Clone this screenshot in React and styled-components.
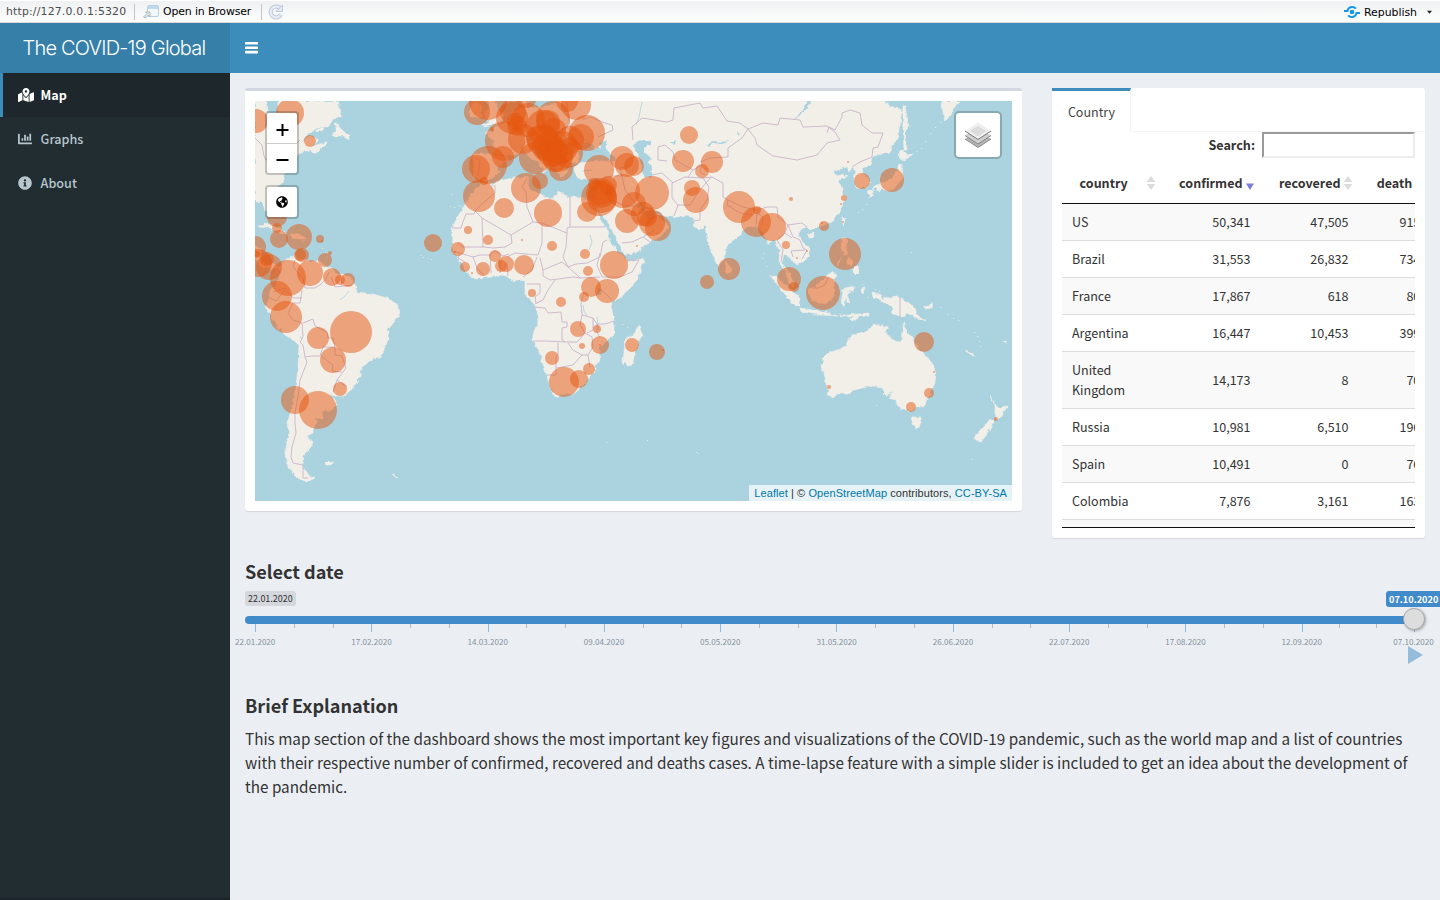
import React from "react";
import styled, { createGlobalStyle, css } from "styled-components";
import { FaMapMarkedAlt, FaChartBar, FaInfoCircle, FaGlobeAmericas } from "react-icons/fa";

const sans = `"Source Sans Pro", "Noto Sans CJK SC", "Noto Sans", sans-serif`;
const helvetica = `"Liberation Sans", Arial, sans-serif`;
const lucida = `"DejaVu Sans", sans-serif`;

const Global = createGlobalStyle`
  * { box-sizing: border-box; }
  body { margin: 0; background: #ecf0f5; overflow: hidden; font-family: ${sans}; color: #333; }
`;

const Page = styled.div`
  width: 1440px;
  height: 900px;
  display: flex;
  flex-direction: column;
  overflow: hidden;
  background: #ebeff4;
`;

/* viewer toolbar */
const Toolbar = styled.div`
  height: 23px;
  flex: none;
  display: flex;
  align-items: center;
  padding: 0 7px 0 6px;
  border-top: 1px solid #fff;
  border-bottom: 1px solid #d9dadb;
  background: linear-gradient(#eff1f2, #fdfdfd);
  font: 10.9px/21px ${lucida};
  color: #000;
`;
const Address = styled.span`
  color: #4d4d4d;
  width: 128px;
  letter-spacing: 0.17px;
  white-space: nowrap;
`;
const Divider = styled.span`
  width: 1px;
  height: 16px;
  background: #c3c6c8;
  margin-right: ${(p) => p.$gap}px;
`;
const ToolLabel = styled.span`
  letter-spacing: ${(p) => p.$spacing || 0}px;
  white-space: nowrap;
  width: ${(p) => p.$w}px;
  margin-left: 4px;
  padding-top: ${(p) => p.$drop || 0}px;
`;
const Spacer = styled.div`flex: 1;`;

/* header */
const Header = styled.header`
  height: 50px;
  flex: none;
  display: flex;
  background: #3c8dbc;
`;
const Brand = styled.div`
  width: 230px;
  background: #367fa9;
  color: #fff;
  font: 300 20px/50px Inter, ${helvetica};
  letter-spacing: -0.78px;
  padding-left: 22.5px;
  white-space: nowrap;
`;
const MenuToggle = styled.div`
  padding: 19px 15px 0 14.5px;
  display: flex;
`;

/* body */
const Body = styled.div`flex: 1; display: flex; min-height: 0;`;
const Sidebar = styled.nav`
  width: 230px;
  flex: none;
  background: #222d32;
  box-shadow: inset 0 -3px 2px -1px #1b2428;
`;
const NavItem = styled.div`
  height: 44px;
  display: flex;
  align-items: center;
  padding: 0 0 1px 15px;
  border-left: 3px solid transparent;
  font-size: 12.6px;
  font-weight: 500;
  color: #b8c7ce;
  ${(p) => p.$active && css`
    border-left-color: #3c8dbc;
    background: #1e282c;
    color: #fff;
    font-weight: 700;
  `}
`;
const NavIcon = styled.span`width: 22.6px; display: flex; align-items: center; height: 16px;`;

const Content = styled.main`
  flex: 1;
  min-width: 0;
  padding: 15px 0 0 15px;
`;
const Boxes = styled.div`display: flex; gap: 30px; align-items: flex-start; height: 450px;`;
const MapBox = styled.section`
  width: 777px;
  height: 423px;
  background: #fff;
  border-top: 3px solid #d2d6de;
  border-radius: 3px;
  padding: 10px;
  box-shadow: 0 1px 1px rgba(0, 0, 0, 0.1);
`;
const MapFrame = styled.div`
  position: relative;
  width: 757px;
  height: 400px;
  background: #aad3df;
  overflow: hidden;
  svg.world { display: block; }
`;
const Controls = styled.div`
  position: absolute;
  left: 10px;
  top: 10px;
  display: flex;
  flex-direction: column;
  gap: 10px;
`;
const Control = styled.div`
  border: 2px solid rgba(0, 0, 0, 0.2);
  background-clip: padding-box;
  background-color: #fff;
  border-radius: 4px;
  width: 34px;
`;
const ControlButton = styled.div`
  height: 30px;
  display: flex;
  align-items: center;
  justify-content: center;
  color: #000;
  & + & { border-top: 1px solid #ccc; }
`;
const Layers = styled.div`
  position: absolute;
  top: 10px;
  right: 10px;
  width: 48px;
  height: 48px;
  display: flex;
  align-items: center;
  justify-content: center;
  border: 2px solid rgba(0, 0, 0, 0.2);
  background-clip: padding-box;
  background-color: #fff;
  border-radius: 5px;
`;
const Attribution = styled.div`
  position: absolute;
  right: 0;
  bottom: 0;
  height: 16px;
  padding: 0 5px;
  background: rgba(255, 255, 255, 0.7);
  font: 11px/16px ${helvetica};
  letter-spacing: 0.075px;
  white-space: nowrap;
  b { font-weight: 400; color: #0078a8; }
`;

/* country table */
const TabBox = styled.section`
  width: 373px;
  height: 450px;
  background: #fff;
  border-radius: 3px;
  box-shadow: 0 1px 1px rgba(0, 0, 0, 0.1);
`;
const Tabs = styled.div`height: 44px; border-bottom: 1px solid #f4f4f4;`;
const Tab = styled.div`
  width: 79px;
  height: 44px;
  border-top: 3px solid #3c8dbc;
  border-right: 1px solid #f4f4f4;
  background: #fff;
  font-size: 12.5px;
  line-height: 42px;
  padding-left: 1px;
  text-align: center;
  color: #444;
`;
const Pane = styled.div`width: 353px; margin: 0 10px;`;
const SearchRow = styled.label`
  display: flex;
  justify-content: flex-end;
  height: 26px;
  gap: 7px;
  font-size: 12.6px;
  line-height: 25px;
  font-weight: 700;
`;
const SearchInput = styled.input`
  width: 153px;
  height: 26px;
  border: 2px solid;
  border-color: #9a9a9a #ededed #ededed #9a9a9a;
  background: #fff;
  outline: none;
`;
const Scroll = styled.div`
  height: 370px;
  width: 353px;
  overflow: hidden;
  border-bottom: 1px solid #111;
`;
const TableRow = styled.div`
  display: grid;
  grid-template-columns: 98.7px 99.8px 98px 71.8px;
  align-items: center;
  width: 369px;
  border-bottom: 1px solid #ddd;
  background: ${(p) => (p.$odd ? "#f9f9f9" : "#fff")};
`;
const HeadRow = styled(TableRow)`
  height: 46px;
  padding-top: 5px;
  border-bottom-color: #111;
  background: #fff;
`;
const Cell = styled.div`
  padding: 8px 10px;
  font-size: 12.53px;
  line-height: 20px;
  text-align: ${(p) => (p.$num ? "right" : "left")};
`;
const HeadCell = styled.div`
  display: flex;
  align-items: center;
  justify-content: ${(p) => (p.$num ? "flex-end" : "space-between")};
  padding: 0 5px 0 ${(p) => (p.$num ? 0 : 17.6)}px;
  gap: 3px;
  font-size: 12.53px;
  font-weight: 700;
  line-height: 20px;
  white-space: nowrap;
`;

/* lower part */
const Heading = styled.h3`
  margin: ${(p) => p.$top}px 0 0;
  font-size: 18.1px;
  line-height: 22px;
  font-weight: 700;
  color: #333;
`;
const Slider = styled.div`position: relative; width: 1195px; height: 84px; margin-top: 9px;`;
const Badges = styled.div`display: flex; justify-content: space-between; height: 16px;`;
const Badge = styled.span`
  height: ${(p) => (p.$on ? 16 : 15)}px;
  width: ${(p) => (p.$on ? 59 : 51)}px;
  padding: 0 3px;
  border-radius: 3px;
  background: ${(p) => (p.$on ? "#428bca" : "#d4d7dc")};
  color: ${(p) => (p.$on ? "#fff" : "#333")};
  font-weight: ${(p) => (p.$on ? 700 : 400)};
  font-size: ${(p) => (p.$on ? 9.2 : 8.95)}px;
  line-height: ${(p) => (p.$on ? 17 : 15)}px;
  white-space: nowrap;
  flex: none;
  margin-right: ${(p) => (p.$on ? -5 : 0)}px;
`;
const Track = styled.div`
  height: 8px;
  margin: 9px 0 0;
  width: 1170px;
  border-radius: 4px;
  background: #428bca;
`;
const Handle = styled.div`
  position: absolute;
  left: 1158px;
  top: 17px;
  width: 22px;
  height: 22px;
  border-radius: 50%;
  border: 1px solid #aaa;
  background: #ddd;
  box-shadow: 1px 1px 3px rgba(0, 0, 0, 0.3);
`;
const Ticks = styled.div`display: flex; padding-left: 10px; height: 8px;`;
const Tick = styled.div`
  width: ${(p) => p.$w}px;
  height: ${(p) => (p.$big ? 8 : 4)}px;
  border-left: 1px solid ${(p) => (p.$big ? "#8fbbdf" : "#b5bac0")};
  flex: none;
`;
const TickLabels = styled.div`display: flex; margin-left: -48px; margin-top: 4px;`;
const TickLabel = styled.span`
  width: ${(p) => p.$w || 116.3}px;
  flex: none;
  text-align: center;
  font-size: 8.1px;
  line-height: 12px;
  color: #87929d;
`;
const Play = styled.svg`position: absolute; right: 17px; top: 55px;`;
const Paragraph = styled.p`
  margin: 10px 0 0;
  width: 1180px;
  font-size: 15.27px;
  line-height: 24px;
  color: #333;
  white-space: nowrap;
`;

const LAND = [
  "255,101 266,101 267,112 272,120 277,113 278,101 338,101 340,108 341,116 334,118 328,127 320,127 312,131 305,137 301,143 311,136 318,139 313,146 327,142 326,146 314,153 311,150 300,152 297,158 291,165 284,174 283,182 275,189 267,198 268,211 265,211 262,201 255,202",
  "334,124 337,127 333,136 343,136 349,140 349,135 344,131 340,127 338,124",
  "315,131 323,127 322,130 317,132",
  "255,246 261,248 261,259 265,265 273,264 280,267 283,264 286,259 293,257 295,254 297,260 303,259 312,262 320,261 325,266 331,268 337,274 346,276 352,279 355,285 357,292 373,294 387,298 398,305 400,313 393,322 388,329 388,340 383,353 380,358 373,359 362,367 360,376 352,390 345,396 335,396 330,394 335,400 337,405 332,410 323,411 322,418 313,418 318,422 313,427 313,433 307,437 312,443 311,447 305,453 302,462 303,467 308,475 315,478 307,482 298,478 292,472 287,465 285,453 287,443 289,430 288,423 290,414 293,400 296,387 298,367 299,345 297,342 285,335 278,327 270,313 265,307 268,303 270,291 277,284 281,271 277,267 271,269 263,267 257,263 255,261",
  "258,227 264,224 273,225 280,229 286,233 280,233 270,228",
  "291,234 299,234 306,239 298,239 291,238",
  "484,182 493,185 499,181 513,178 529,177 528,186 531,191 540,193 550,199 555,198 557,192 570,197 585,199 591,201 597,212 603,223 607,230 610,242 617,250 624,257 627,262 644,258 643,263 637,280 625,293 612,303 611,307 613,315 614,322 614,335 607,340 599,349 600,362 595,364 595,372 585,383 575,393 565,394 555,397 552,392 547,377 542,365 540,353 533,340 533,333 538,323 537,308 530,299 525,294 525,287 525,281 518,280 512,281 508,277 503,275 490,276 477,278 472,277 465,270 457,258 452,249 453,237 452,228 457,218 463,208 470,196 476,188",
  "639,325 642,335 639,340 632,365 627,366 623,362 624,353 625,340 633,335 637,328",
  "482,126 490,120 484,118 486,112 490,105 484,98 494,98 495,103 499,112 503,114 502,122 490,125",
  "470,118 482,117 482,108 476,101 470,108",
  "522,95 523,108 513,112 509,120 503,124 494,128 494,132 485,133 493,139 495,151 493,154 473,154 473,171 473,178 481,179 483,181 493,178 499,172 498,168 507,159 508,154 516,155 524,150 528,155 534,160 543,167 544,174 547,170 547,165 551,167 544,161 538,157 534,151 534,146 538,145 541,150 554,159 554,165 560,174 561,179 564,176 567,172 564,167 573,163 578,163 578,153 585,143 593,143 594,149 601,147 598,143 607,140 606,147 606,149 617,159 615,162 601,161 588,162 581,163 575,166 574,170 578,178 587,179 601,179 598,191 596,198 591,201 596,208 598,203 598,208 603,217 608,223 617,240 622,250 625,255 637,252 650,242 661,236 669,226 661,221 659,214 652,220 645,219 644,214 635,203 641,202 647,210 658,211 664,216 673,217 688,216 695,220 693,226 699,230 705,225 706,233 710,248 718,267 725,257 727,245 740,235 745,228 755,227 760,228 766,239 767,244 775,240 780,250 779,262 785,270 789,283 793,287 794,283 789,272 784,267 782,262 784,254 790,257 797,265 800,263 808,258 810,250 803,242 798,233 802,228 807,227 810,230 823,225 832,222 840,212 843,203 847,198 842,193 843,188 838,182 842,178 847,177 842,174 838,177 833,172 843,168 848,167 848,172 853,168 855,172 853,178 856,185 860,188 867,187 870,182 863,173 862,168 870,165 872,157 883,153 890,152 897,138 900,125 902,110 893,107 885,103 884,95 560,95 558,101 552,105 538,108 527,108 526,95",
  "903,106 905,106 907,117 909,128 905,132 907,150 904,150 903,130",
  "942,101 960,101 954,107 950,115 945,122 943,113",
  "902,149 907,154 913,153 908,158 904,160 898,157",
  "898,162 902,165 903,177 898,184 893,190 884,190 876,188 872,190 876,185 885,183 893,176 898,170",
  "868,190 873,191 873,196 870,197",
  "876,188 882,189 879,192",
  "843,217 845,219 843,226 841,222",
  "809,234 814,233 812,238 808,237",
  "842,239 847,239 846,250 849,254 844,255 841,248",
  "852,271 855,265 858,266 859,272 856,275",
  "847,257 852,260 851,266 847,262",
  "836,265 841,258 842,258 837,266",
  "725,262 728,263 731,269 728,273 726,270",
  "808,290 813,287 820,283 827,276 832,272 837,275 833,279 835,290 832,300 825,304 817,303 811,298",
  "770,275 778,278 788,287 800,298 800,307 795,305 783,292 776,283",
  "800,308 812,310 827,313 837,316 820,315 802,312",
  "842,290 855,287 853,290 845,291 850,292 847,295 850,303 847,302 845,297 845,306 842,306 841,298",
  "872,293 880,294 882,299 890,298 897,297 910,303 915,308 917,315 927,321 918,319 907,313 903,317 893,314 892,307 884,302 877,298 873,297",
  "922,307 928,306 933,303 932,308 925,309",
  "850,319 855,317 860,316 856,319 851,321",
  "839,315 848,315 858,314 869,313 869,315 850,317",
  "862,288 865,287 863,294 861,292",
  "823,358 822,368 825,378 828,390 827,395 833,397 840,393 850,393 860,388 873,386 882,387 886,397 892,390 889,398 895,400 898,407 910,411 917,407 924,407 928,398 935,383 936,373 932,363 925,355 918,350 913,340 907,332 904,322 902,332 901,342 895,341 885,333 888,327 875,324 868,330 865,333 858,332 850,338 847,345 840,349 828,353",
  "911,418 921,418 920,425 916,429 913,425",
  "991,396 996,405 1000,408 1007,407 1002,415 997,421 995,413 995,406",
  "990,419 994,422 988,432 980,442 973,438 983,427",
  "966,350 975,356 973,356 967,352",
  "1003,342 1007,341 1006,344",
  "326,463 334,462 331,465 327,465",
  "391,474 395,475 397,478",
];

const WATER = [
  "633,145 642,140 650,140 650,145 643,147 645,153 652,158 648,162 652,168 651,177 643,177 641,163 637,153",
  "811,101 808,108 800,115 797,118 794,119 803,110 808,101",
  "708,144 712,141 722,142 732,141 722,144 713,143 710,146",
  "672,142 676,140 675,145",
  "598,289 603,290 602,295 597,295",
  "737,132 740,134 738,136",
];

const BORDERS = [
  "495,185 495,193 483,203 475,211 474,214 466,214 463,222 461,228 452,228",
  "475,211 482,218 511,235 512,243 505,247 493,248 483,247 463,247 458,243",
  "482,218 483,247",
  "511,235 533,222 527,207 526,192 522,187 527,178",
  "533,222 542,223 567,233 567,228 570,227 570,197",
  "570,227 605,227",
  "567,233 566,247 563,257 568,267 577,275 580,278 600,277",
  "542,223 542,243 538,255 515,253 507,257",
  "537,257 532,270 523,277",
  "540,258 543,270 562,262 568,267",
  "543,270 543,276 550,280 573,277 580,278",
  "568,267 576,264 587,263 600,257 603,242 607,240",
  "600,253 597,265 602,277 620,277 632,272 639,260 627,260",
  "527,284 540,284 540,293 535,297 536,303",
  "555,280 548,290 543,300 535,304",
  "533,307 545,308 548,313 561,312 562,322 567,322 567,327 562,328 562,340 565,342 577,342 585,333 580,325 582,315 581,303 584,292",
  "533,341 545,341 565,342",
  "558,343 558,355 556,357 556,375 547,375",
  "568,343 573,350 582,355 573,365 556,368",
  "582,355 588,355 593,347 592,337 585,333",
  "588,355 590,367",
  "597,324 605,324 614,321",
  "582,315 593,318 597,324 597,332 600,338",
  "593,318 593,330 587,333",
  "598,288 606,294 612,300",
  "453,251 460,253 473,257 477,268 484,276",
  "473,257 480,255 490,255 495,251 503,256 509,254",
  "490,255 491,273",
  "500,273 500,260",
  "508,276 507,262",
  "460,253 458,258 465,262",
  "633,140 632,127 642,118 667,122 673,120 674,108 700,103 703,108 717,106 727,121 740,123 748,129 742,138 728,148 728,157 710,158 700,162",
  "748,129 763,123 778,125 780,118 800,120 803,127 827,126 835,132 840,140 827,143 817,155 797,160 773,156 757,145 755,138 748,129",
  "827,133 829,127 835,130 842,117 842,113 850,110 860,113 862,125 872,133 883,133 878,147 873,148 872,157 860,162 852,167",
  "703,178 712,177 723,183 723,197 728,200 743,207 757,210 767,207 777,207 778,217 788,225 802,223 807,227",
  "728,200 727,205 740,213 753,215 757,210",
  "757,214 756,225",
  "762,225 763,217 757,213",
  "703,178 709,187 707,200 700,210 700,220 694,221",
  "672,183 672,198 678,205 674,216",
  "672,183 685,177 703,178",
  "678,205 690,205 700,190 711,177",
  "658,147 658,160 667,161",
  "658,147 665,145 673,152 675,160 693,170 688,177",
  "693,170 702,165 700,172 705,175",
  "652,175 662,173 673,183",
  "788,225 785,233 777,240 783,250 781,262",
  "788,225 793,237 800,240 803,248 807,250 802,259",
  "793,257 791,251 805,250",
  "785,233 792,238",
  "622,243 632,242 643,237 650,242",
  "643,237 655,230",
  "598,137 613,130 612,125 602,122 590,117 582,120",
  "567,101 568,115 570,125 562,130",
  "570,125 585,140",
  "545,128 560,132 568,140",
  "540,115 545,128",
  "520,128 528,140 520,148",
  "494,154 508,157",
  "475,158 480,160 478,176",
  "603,178 612,176 622,176 625,190 635,203",
  "622,176 620,168 630,166",
  "602,205 612,200 625,206 636,206",
  "300,342 303,345 305,357 307,362 304,370 300,380 298,397 295,413 295,423 296,433 292,447 291,457 293,463 303,465 303,478 308,478",
  "302,290 300,303 293,303 288,313 293,320 302,323 303,337 300,342",
  "303,323 313,319 315,326 327,332 328,338 333,338 335,347 335,355 342,356 346,368 337,380 333,392",
  "335,347 323,347 320,356 312,356 305,357",
  "321,356 333,365 332,371 342,372",
  "337,380 347,387",
  "295,260 293,266 297,272 303,278 305,288 315,288 320,285 325,280 329,272",
  "273,292 285,288 293,298 302,298",
  "270,298 276,301 285,290",
  "331,277 335,287 352,285",
  "341,278 342,286",
  "900,298 900,317",
  "812,288 818,288 825,285 828,278",
  "255,138 262,145 264,156 266,160 276,158 290,150 300,140",
];

const CASES = `256 121 12,290 113 14,310 141 6,277 217 10,277 228 5,279 239 9,299 237 13,320 239 4,322 241 1,
255 247 11,302 255 7,300 255 6,325 260 7,330 253 2,258 263 14,269 267 13,267 259 7,257 254 3,288 278 18,310 273 13,
332 277 9,340 280 5,348 280 7,277 296 15,286 317 16,351 332 21,318 338 11,333 360 13,340 389 7,295 400 14,318 410 19,
433 243 9,477 112 13,488 101 19,512 118 16,517 126 10,528 120 17,505 141 20,488 165 19,476 169 14,503 157 11,484 181 4,
479 196 16,504 208 10,526 188 15,540 181 8,548 213 14,468 230 4,488 240 5,522 240 1,552 246 5,458 249 7,455 252 1,
465 267 5,472 273 1,483 269 7,495 256 6,501 266 6,506 264 8,524 265 10,585 254 5,588 271 5,614 265 14,591 287 10,
607 291 12,584 297 5,532 293 4,561 302 5,526 97 11,553 118 17,543 127 17,554 130 12,523 139 15,535 158 16,567 101 11,
576 105 15,587 133 18,581 137 13,570 140 14,562 147 16,543 140 16,550 144 13,552 152 15,558 157 15,561 169 12,568 153 15,547 147 15,
513 112 13,515 121 8,548 122 12,538 138 12,546 137 10,562 152 12,545 150 10,557 152 11,554 158 9,
555 160 12,492 129 2,599 170 15,622 158 12,627 165 12,634 166 10,623 191 17,652 193 17,599 198 18,601 193 15,602 198 15,
600 193 12,608 185 9,594 184 6,587 212 10,627 221 12,634 204 12,643 214 12,647 217 10,658 228 13,652 223 13,637 246 1,
689 135 9,683 161 11,712 162 11,702 171 7,692 188 8,696 200 13,739 207 16,756 222 15,772 227 14,757 210 4,791 199 2,
844 198 3,841 204 1,848 162 1,862 181 8,892 180 12,843 222 1,824 226 5,822 223 1,786 245 4,807 251 1,797 258 1,
845 254 16,789 279 12,794 287 5,823 293 17,729 269 11,707 282 7,578 329 8,597 329 4,582 346 3,600 345 9,600 345 1,
632 345 7,657 352 8,663 350 1,552 358 7,564 382 15,579 379 9,589 369 6,924 342 10,934 372 1,929 393 5,911 407 5,
829 387 2,996 419 2`.split(",").map((c) => c.trim().split(" ").map(Number));

const SPECKS = "302,241 322,248 325,252 326,257 420,255 423,257 428,258 431,259 451,194 450,206 454,207 458,205 460,206 763,253 762,258 766,266 868,197 866,204 862,209 858,212 921,148 916,151 925,141 930,133 935,127 940,122 911,252 862,284 867,297 875,289 879,291 940,307 947,314 953,318 958,320 974,332 977,336 979,341 980,346 973,507 606,442 647,440 696,452 698,453 971,459 876,405 622,324 627,327 545,160".split(" ").map((s) => s.split(","));

function WorldMap() {
  return (
    <svg className="world" width="757" height="400" viewBox="255 101 757 400">
      <defs>
        <filter id="coast" filterUnits="userSpaceOnUse" x="245" y="91" width="777" height="420" colorInterpolationFilters="sRGB">
          <feTurbulence type="fractalNoise" baseFrequency="0.2" numOctaves="2" seed="4" result="n" />
          <feDisplacementMap in="SourceGraphic" in2="n" scale="4.5" xChannelSelector="R" yChannelSelector="G" />
        </filter>
      </defs>
      <g filter="url(#coast)">
        <g fill="#f2efe9" stroke="#f2efe9" strokeWidth="0.6" strokeLinejoin="round">
          {LAND.map((p, i) => <polygon key={i} points={p} />)}
        </g>
        <g fill="#aad3df">{WATER.map((p, i) => <polygon key={i} points={p} />)}</g>
      </g>
      <g fill="#f2efe9">
        {SPECKS.map(([x, y], i) => <rect key={i} x={x} y={y} width="1.2" height="1" opacity=".75" />)}
      </g>
      <g fill="none" stroke="#aad3df" strokeWidth="1">
        <path d="M583 305l1 6 3 5M597 317l1 8 1 5M592 170l-10 1M590 235l2 7-3 8M340 300l5-4 4-5M300 336l2 3M636 125l3-8 3-15" opacity=".8" />
      </g>
      <g fill="none" stroke="#c9b4cb" strokeWidth="0.9" strokeLinejoin="round">
        {BORDERS.map((p, i) => <polyline key={i} points={p} />)}
      </g>
      <g fill="#e6550d" fillOpacity="0.5">
        {CASES.map(([x, y, r], i) => <circle key={i} cx={x} cy={y} r={r} />)}
      </g>
    </svg>
  );
}

function SortIcon({ active }) {
  return (
    <svg width="10" height="14" viewBox="0 0 10 14">
      {active ? (
        <path d="M1 7.5h8L5 14z" fill="#7a7fe0" />
      ) : (
        <path d="M.7 6h8.6L5 0zM.7 8h8.6L5 14z" fill="#dcdcdc" />
      )}
    </svg>
  );
}

const ROWS = [
  ["US", "50,341", "47,505", "915"],
  ["Brazil", "31,553", "26,832", "734"],
  ["France", "17,867", "618", "80"],
  ["Argentina", "16,447", "10,453", "399"],
  ["United Kingdom", "14,173", "8", "70"],
  ["Russia", "10,981", "6,510", "196"],
  ["Spain", "10,491", "0", "76"],
  ["Colombia", "7,876", "3,161", "163"],
  ["", "", "", ""],
];

const DATES = ["22.01.2020", "17.02.2020", "14.03.2020", "09.04.2020", "05.05.2020", "31.05.2020", "26.06.2020", "22.07.2020", "17.08.2020", "12.09.2020", "07.10.2020"];

export default function App() {
  return (
    <Page>
      <Global />
      <Toolbar>
        <Address>http://127.0.0.1:5320</Address>
        <Divider $gap={8} />
        <svg width="16" height="14" viewBox="0 0 16 14">
          <rect x="4.5" y="0.5" width="11" height="11" rx="1.5" fill="#f3f7fa" stroke="#b9cfdd" />
          <path d="M5 1h10v3H5z" fill="#bcdcf0" />
          <path d="M0.500 12l3.500-3.500-1.500-1.500h4.500v4.500L5.500 10l-3 3z" fill="#e3e6e8" stroke="#9aa5ac" strokeWidth=".7" />
        </svg>
        <ToolLabel $w={98} $spacing={-0.13}>Open in Browser</ToolLabel>
        <Divider $gap={6} />
        <svg width="16" height="16" viewBox="0 0 16 16" fill="none">
          <path d="M13 10.500A5.500 5.500 0 1 1 12 4" stroke="#b3bfd3" strokeWidth="4" />
          <path d="M13 10.500A5.500 5.500 0 1 1 12 4" stroke="#e6ecf6" strokeWidth="2.500" />
          <path d="M14.500 1v6.500H8z" fill="#e6ecf6" stroke="#b3bfd3" strokeWidth=".8" />
        </svg>
        <Spacer />
        <svg width="16" height="12" viewBox="0 0 16 12" fill="none" stroke="#1597e5" strokeWidth="2">
          <path d="M0 5h3.500C4 2.500 6 1 8.200 1c1.500 0 2.800.6 3.600 1.700M16 7h-3.500c-.5 2.500-2.500 4-4.700 4-1.500 0-2.800-.6-3.600-1.700" />
          <circle cx="8" cy="6" r="2.300" fill="#1597e5" stroke="none" />
        </svg>
        <ToolLabel $w={62} $spacing={-0.02} $drop={2}>Republish</ToolLabel>
        <svg width="7" height="4" viewBox="0 0 7 4"><path d="M1 .7h5L3.500 3.700z" fill="#222" /></svg>
      </Toolbar>
      <Header>
        <Brand>The COVID-19 Global</Brand>
        <MenuToggle>
          <svg width="13" height="12" viewBox="0 0 13 12" fill="#fff">
            <rect y="0" width="13" height="2.600" rx=".6" />
            <rect y="4.400" width="13" height="2.600" rx=".6" />
            <rect y="8.800" width="13" height="2.600" rx=".6" />
          </svg>
        </MenuToggle>
      </Header>
      <Body>
        <Sidebar>
          <NavItem $active><NavIcon><FaMapMarkedAlt size={16} /></NavIcon>Map</NavItem>
          <NavItem><NavIcon><FaChartBar size={14} /></NavIcon>Graphs</NavItem>
          <NavItem><NavIcon><FaInfoCircle size={14} /></NavIcon>About</NavItem>
        </Sidebar>
        <Content>
          <Boxes>
            <MapBox>
              <MapFrame>
                <WorldMap />
                <Controls>
                  <Control>
                    <ControlButton>
                      <svg width="13" height="16" viewBox="0 0 13 16"><path d="M.5 10h12M6.500 4v12" stroke="#000" strokeWidth="2" /></svg>
                    </ControlButton>
                    <ControlButton>
                      <svg width="13" height="14" viewBox="0 0 13 14"><path d="M.5 8h12" stroke="#000" strokeWidth="2" /></svg>
                    </ControlButton>
                  </Control>
                  <Control>
                    <ControlButton><FaGlobeAmericas size={12} /></ControlButton>
                  </Control>
                </Controls>
                <Layers>
                  <svg width="26" height="26" viewBox="0 0 26 26">
                    <path d="M0 17l13-8 13 8-13 8.500z" fill="#b4b4b4" />
                    <path d="M0 17l13 8.500L26 17" fill="none" stroke="#8d8d8d" />
                    <path d="M0 13.500l13-8 13 8L13 22z" fill="#d0d0d0" />
                    <path d="M0 13.500L13 22l13-8.500" fill="none" stroke="#858585" />
                    <path d="M0 9l13-8.500L26 9l-13 8.500z" fill="#efefef" />
                    <path d="M5 9l8-5 8 5-8 5.500z" fill="#dcdcdc" />
                    <path d="M0 9l13 8.500L26 9" fill="none" stroke="#777" />
                  </svg>
                </Layers>
                <Attribution>
                  <b>Leaflet</b> | © <b>OpenStreetMap</b> contributors, <b>CC-BY-SA</b>
                </Attribution>
              </MapFrame>
            </MapBox>
            <TabBox>
              <Tabs><Tab>Country</Tab></Tabs>
              <Pane>
                <SearchRow>Search:<SearchInput /></SearchRow>
                <Scroll>
                  <HeadRow>
                    <HeadCell>country<SortIcon /></HeadCell>
                    <HeadCell $num>confirmed<SortIcon active /></HeadCell>
                    <HeadCell $num>recovered<SortIcon /></HeadCell>
                    <HeadCell $num>death<SortIcon /></HeadCell>
                  </HeadRow>
                  {ROWS.map((r, i) => (
                    <TableRow key={i} $odd={i % 2 === 0}>
                      <Cell>{r[0]}</Cell>
                      <Cell $num>{r[1]}</Cell>
                      <Cell $num>{r[2]}</Cell>
                      <Cell $num>{r[3]}</Cell>
                    </TableRow>
                  ))}
                </Scroll>
              </Pane>
            </TabBox>
          </Boxes>
          <Heading $top={22}>Select date</Heading>
          <Slider>
            <Badges>
              <Badge>22.01.2020</Badge>
              <Badge $on>07.10.2020</Badge>
            </Badges>
            <Track />
            <Ticks>
              {DATES.flatMap((d, i) => {
                const w = i === 9 ? 37.4 : 38.77;
                const big = <Tick key={d} $big $w={w} />;
                return i === 10 ? [big] : [big, <Tick key={d + "a"} $w={w} />, <Tick key={d + "b"} $w={w} />];
              })}
            </Ticks>
            <TickLabels>
              {DATES.map((d, i) => <TickLabel key={d} $w={i === 10 ? 107 : 0}>{d}</TickLabel>)}
            </TickLabels>
            <Handle />
            <Play width="15" height="18" viewBox="0 0 15 18"><path d="M0 0v18l15-9z" fill="#95bddb" /></Play>
          </Slider>
          <Heading $top={19}>Brief Explanation</Heading>
          <Paragraph>
            This map section of the dashboard shows the most important key figures and visualizations of the COVID-19 pandemic, such as the world map and a list of countries
            <br />
            with their respective number of confirmed, recovered and deaths cases. A time-lapse feature with a simple slider is included to get an idea about the development of
            <br />
            the pandemic.
          </Paragraph>
        </Content>
      </Body>
    </Page>
  );
}
